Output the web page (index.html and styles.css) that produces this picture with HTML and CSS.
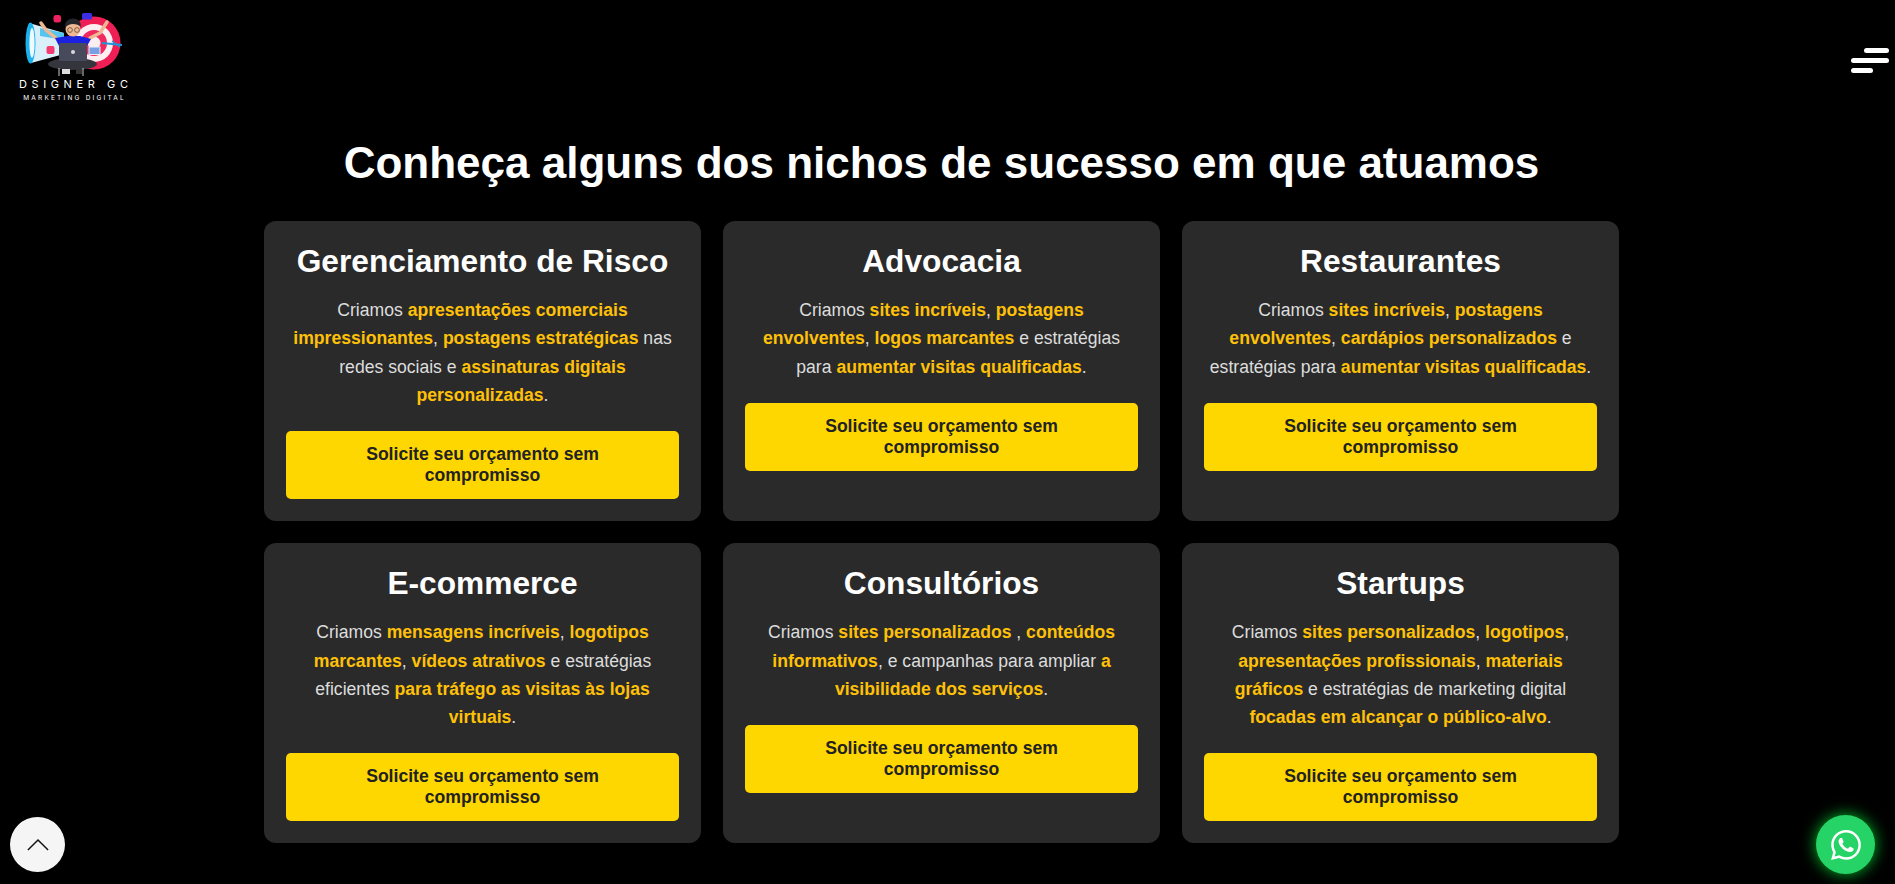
FILE: index.html
```html
<!DOCTYPE html>
<html lang="pt-BR">
<head>
<meta charset="utf-8">
<title>Dsigner GC</title>
<link rel="stylesheet" href="styles.css">
</head>
<body>
<header class="topbar">
  <a class="logo" href="#">
    <svg class="logo-art" viewBox="0 0 130 76" width="130" height="76" aria-hidden="true">
      <circle cx="94" cy="43" r="26.5" fill="#ee1f55"/>
      <circle cx="94" cy="43" r="19" fill="#fdeef2"/>
      <circle cx="94" cy="43" r="13" fill="#f02a60"/>
      <circle cx="94" cy="43" r="6.5" fill="#fdeef2"/>
      <path d="M29 23 L64 33 L64 54 L31 63 Z" fill="#d9f0fb"/>
      <path d="M40 28 L64 33 L64 40 L40 36 Z" fill="#55c5ee"/>
      <ellipse cx="30.5" cy="43" rx="5" ry="20.5" fill="#19b2ec"/>
      <ellipse cx="32" cy="43" rx="2.6" ry="15" fill="#eefaff"/>
      <rect x="53.5" y="15" width="7.5" height="7.5" rx="2.5" fill="#f0225f"/>
      <rect x="82" y="13" width="10" height="6.5" rx="1.5" fill="#3b2fe6"/>
      <rect x="46.5" y="46" width="8" height="8" rx="2" fill="#f43a70"/>
      <rect x="89" y="47" width="11" height="7.5" fill="#7aa0e4" stroke="#e8eefb" stroke-width="1"/>
      <path d="M102 43 L122 45" stroke="#1d95d6" stroke-width="2"/>
      <path d="M112 41 L120 47" stroke="#1d95d6" stroke-width="1.5"/>
      <path d="M41 23 L46 30 L56 38" stroke="#edb892" stroke-width="3.5" fill="none" stroke-linecap="round"/>
      <path d="M107 22 L100 33 L90 38" stroke="#edb892" stroke-width="3.5" fill="none" stroke-linecap="round"/>
      <path d="M55 38 L68 36 L80 36 L91 39 L87 46 L85 62 L61 62 L59 46 Z" fill="#1c20df"/>
      <circle cx="73" cy="29" r="7.5" fill="#edb892"/>
      <path d="M65 28 Q64 19 73 18.5 Q81 18.5 81 27 Q78 24 73 24 Q68 24 65 28 Z" fill="#25262b"/>
      <circle cx="70" cy="30" r="2.4" fill="none" stroke="#6b4a33" stroke-width=".8"/>
      <circle cx="77" cy="30" r="2.4" fill="none" stroke="#6b4a33" stroke-width=".8"/>
      <ellipse cx="72.5" cy="64" rx="24.5" ry="6" fill="#34353d"/>
      <rect x="59" y="43" width="28" height="18" rx="1.5" fill="#474a5a"/>
      <circle cx="73" cy="52" r="2" fill="#d8d8de"/>
      <path d="M59 68 L59 76 M83 68 L83 76" stroke="#ccc" stroke-width="1"/>
      <rect x="62" y="69" width="8" height="5" fill="#ddd"/>
      <rect x="76" y="69" width="6" height="5" fill="#333"/>
    </svg>
    <span class="logo-name">DSIGNER GC</span>
    <span class="logo-sub">MARKETING DIGITAL</span>
  </a>
</header>

<button class="menu-toggle" aria-label="Menu"><span class="bar bar-a"></span><span class="bar bar-b"></span><span class="bar bar-c"></span></button>

<main class="niches">
  <h2 class="niches-title">Conheça alguns dos nichos de sucesso em que atuamos</h2>
  <div class="niche-grid">
    <article class="niche-card">
      <h3>Gerenciamento de Risco</h3>
      <p>Criamos <strong>apresentações comerciais impressionantes</strong>, <strong>postagens estratégicas</strong> nas redes sociais e <strong>assinaturas digitais personalizadas</strong>.</p>
      <a class="cta" href="#">Solicite seu orçamento sem compromisso</a>
    </article>
    <article class="niche-card">
      <h3>Advocacia</h3>
      <p>Criamos <strong>sites incríveis</strong>, <strong>postagens envolventes</strong>, <strong>logos marcantes</strong> e estratégias para <strong>aumentar visitas qualificadas</strong>.</p>
      <a class="cta" href="#">Solicite seu orçamento sem compromisso</a>
    </article>
    <article class="niche-card">
      <h3>Restaurantes</h3>
      <p>Criamos <strong>sites incríveis</strong>, <strong>postagens envolventes</strong>, <strong>cardápios personalizados</strong> e estratégias para <strong>aumentar visitas qualificadas</strong>.</p>
      <a class="cta" href="#">Solicite seu orçamento sem compromisso</a>
    </article>
    <article class="niche-card">
      <h3>E-commerce</h3>
      <p>Criamos <strong>mensagens incríveis</strong>, <strong>logotipos marcantes</strong>, <strong>vídeos atrativos</strong> e estratégias eficientes <strong>para tráfego as visitas às lojas virtuais</strong>.</p>
      <a class="cta" href="#">Solicite seu orçamento sem compromisso</a>
    </article>
    <article class="niche-card">
      <h3>Consultórios</h3>
      <p>Criamos <strong>sites personalizados</strong> , <strong>conteúdos informativos</strong>, e campanhas para ampliar <strong>a visibilidade dos serviços</strong>.</p>
      <a class="cta" href="#">Solicite seu orçamento sem compromisso</a>
    </article>
    <article class="niche-card">
      <h3>Startups</h3>
      <p>Criamos <strong>sites personalizados</strong>, <strong>logotipos</strong>, <strong>apresentações profissionais</strong>, <strong>materiais gráficos</strong> e estratégias de marketing digital <strong>focadas em alcançar o público-alvo</strong>.</p>
      <a class="cta" href="#">Solicite seu orçamento sem compromisso</a>
    </article>
  </div>
</main>

<a class="to-top" href="#" aria-label="Voltar ao topo">
  <svg viewBox="0 0 24 14" width="22" height="13" fill="none" stroke="#111" stroke-width="1.6"><path d="M1 13 L12 2 L23 13"/></svg>
</a>
<a class="whatsapp" href="#" aria-label="WhatsApp">
  <svg viewBox="0 0 24 24" width="30" height="30" fill="#fff"><path d="M17.47 14.38c-.3-.15-1.76-.87-2.03-.97-.27-.1-.47-.15-.67.15-.2.3-.77.97-.94 1.16-.17.2-.35.22-.64.07-.3-.15-1.26-.46-2.39-1.47-.88-.79-1.48-1.76-1.65-2.06-.17-.3-.02-.46.13-.6.13-.14.3-.35.45-.52.15-.17.2-.3.3-.5.1-.2.05-.37-.03-.52-.07-.15-.67-1.61-.92-2.21-.24-.58-.49-.5-.67-.51h-.57c-.2 0-.52.07-.79.37-.27.3-1.04 1.02-1.04 2.48s1.07 2.88 1.21 3.07c.15.2 2.1 3.2 5.08 4.49.71.3 1.26.49 1.69.62.71.23 1.36.2 1.87.12.57-.08 1.76-.72 2.01-1.41.25-.7.25-1.29.17-1.42-.07-.12-.27-.2-.57-.35zM12.05 21.8h-.01a9.87 9.87 0 0 1-5.03-1.38l-.36-.21-3.74.98 1-3.65-.24-.37a9.86 9.86 0 0 1-1.51-5.26c0-5.45 4.44-9.88 9.89-9.88 2.64 0 5.12 1.03 6.99 2.9a9.83 9.83 0 0 1 2.89 6.99c0 5.45-4.44 9.88-9.88 9.88zm8.41-18.3A11.82 11.82 0 0 0 12.05 0C5.5 0 .16 5.34.16 11.89c0 2.1.55 4.14 1.59 5.95L.06 24l6.3-1.65a11.88 11.88 0 0 0 5.68 1.45h.01c6.55 0 11.89-5.34 11.89-11.89 0-3.18-1.24-6.17-3.48-8.41z"/></svg>
</a>
</body>
</html>
```
FILE: styles.css
```css
* { box-sizing: border-box; }
html, body { margin: 0; padding: 0; }
body {
  background: #000;
  color: #fff;
  font-family: "Liberation Sans", Arial, sans-serif;
  height: 884px;
  overflow: hidden;
  padding-right: 12px;
}
.topbar { height: 110px; }
.logo {
  display: flex;
  flex-direction: column;
  align-items: center;
  width: 147px;
  color: #fff;
  text-decoration: none;
}
.logo-art { display: block; align-self: flex-start; filter: blur(0.4px); }
.logo-name {
  font-family: "Inter", sans-serif;
  font-size: 11px;
  letter-spacing: 4.6px;
  line-height: 13px;
  margin: 2px 0 0 4.6px;
  white-space: nowrap;
}
.logo-sub {
  font-family: "Inter", sans-serif;
  font-size: 6.5px;
  letter-spacing: 2.2px;
  line-height: 8px;
  margin: 3px 0 0 2.2px;
  white-space: nowrap;
}
.menu-toggle {
  position: fixed;
  top: 48px;
  right: 6px;
  width: 38px;
  height: 25px;
  padding: 0;
  background: none;
  border: 0;
  display: flex;
  flex-direction: column;
  align-items: flex-end;
  justify-content: space-between;
}
.bar { display: block; height: 5px; background: #fff; border-radius: 3px; }
.bar-a { width: 25px; }
.bar-b { width: 38px; }
.bar-c { width: 22px; margin-right: 16px; }
.niches { width: 1355px; margin: 0 auto; }
.niches-title {
  margin: 27px 0 32px;
  font-size: 44px;
  line-height: 52px;
  text-align: center;
  font-weight: 700;
  color: #fff;
}
.niche-grid {
  display: grid;
  grid-template-columns: repeat(3, 437px);
  gap: 22px;
  justify-content: center;
}
.niche-card {
  min-height: 300px;
  padding: 22px;
  background: #2a2a2a;
  border-radius: 12px;
  text-align: center;
}
.niche-card h3 {
  margin: 0 0 16px;
  font-size: 31.7px;
  line-height: 37px;
  font-weight: 700;
  color: #fff;
}
.niche-card p {
  margin: 0 0 21.6px;
  font-size: 17.6px;
  line-height: 28.4px;
  color: #ddd;
}
.niche-card strong { color: #ffc107; font-weight: 700; }
.cta {
  display: block;
  padding: 13px 24px;
  background: #ffd700;
  border-radius: 5px;
  color: #222;
  font-size: 17.6px;
  line-height: 21px;
  font-weight: 700;
  text-decoration: none;
}
.to-top {
  position: fixed;
  left: 10px;
  bottom: 12px;
  width: 55px;
  height: 55px;
  border-radius: 50%;
  background: #f5f5f5;
  display: flex;
  align-items: center;
  justify-content: center;
}
.whatsapp {
  position: fixed;
  right: 20px;
  bottom: 10px;
  width: 59px;
  height: 59px;
  border-radius: 50%;
  background: #25d366;
  box-shadow: 0 0 15px rgba(0, 255, 60, 0.75);
  display: flex;
  align-items: center;
  justify-content: center;
}
```
